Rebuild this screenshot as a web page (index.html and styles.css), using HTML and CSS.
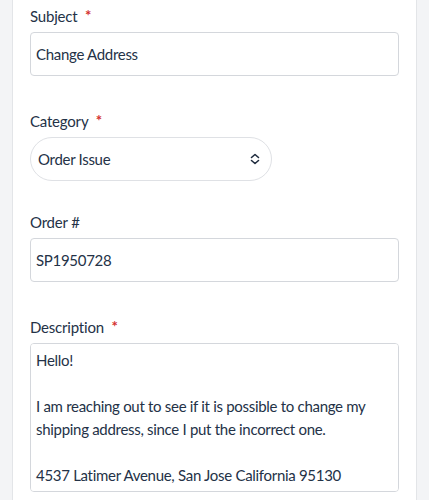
FILE: index.html
```html
<!DOCTYPE html>
<html>
<head>
    <title>Contact Support</title>
    <link rel="stylesheet" href="styles.css">
</head>
<body>
    <div class="page">
        <form class="card">
            <div class="field">
                <label class="label" for="subject">Subject <span class="req">*</span></label>
                <input class="input" id="subject" type="text" value="Change Address">
            </div>

            <div class="field field-select">
                <label class="label" for="category">Category <span class="req">*</span></label>
                <div class="select-wrap">
                    <select class="select" id="category">
                        <option>Order Issue</option>
                    </select>
                    <svg class="chevron" width="10" height="12" viewBox="0 0 10 12">
                        <path d="M1.5 4.5 L5 1.5 L8.5 4.5 M1.5 7.5 L5 10.5 L8.5 7.5" fill="none" stroke="#1f2b3e" stroke-width="1.6" stroke-linecap="round" stroke-linejoin="round"/>
                    </svg>
                </div>
            </div>

            <div class="field">
                <label class="label" for="order">Order #</label>
                <input class="input" id="order" type="text" value="SP1950728">
            </div>

            <div class="field field-last">
                <label class="label" for="description">Description <span class="req">*</span></label>
                <textarea class="textarea" id="description">Hello!

I am reaching out to see if it is possible to change my shipping address, since I put the incorrect one.

4537 Latimer Avenue, San Jose California 95130</textarea>
            </div>
        </form>
    </div>
</body>
</html>
```

FILE: styles.css
```css
body {
    margin: 0;
    background: #f3f4f6;
    font-family: Lato, "Liberation Sans", sans-serif;
    color: #243247;
}
.page {
    padding: 0 12px;
}
.card {
    background: white;
    border-left: 1px solid #e3e5e8;
    border-right: 1px solid #e3e5e8;
    padding: 6px 17px 8px;
    min-height: 500px;
    box-sizing: border-box;
}
.field {
    margin-bottom: 35px;
}
.field-select {
    margin-bottom: 31px;
}
.field-last {
    margin-bottom: 0;
}
.label {
    display: block;
    font-size: 15px;
    letter-spacing: -0.2px;
    line-height: 20px;
    margin-bottom: 6px;
}
.req {
    color: #d32f2f;
    font-size: 15px;
    font-weight: bold;
    line-height: 0;
    margin-left: 4px;
    position: relative;
    top: -1px;
}
.input,
.select,
.textarea {
    display: block;
    box-sizing: border-box;
    font-family: inherit;
    font-size: 15px;
    letter-spacing: -0.3px;
    color: #243247;
    background: white;
    margin: 0;
}
.input {
    width: 100%;
    height: 44px;
    padding: 0 5px;
    border: 1px solid #d4d7dc;
    border-radius: 4px;
}
.select-wrap {
    position: relative;
    width: 242px;
}
.select {
    width: 100%;
    height: 44px;
    padding: 0 7px;
    border: 1px solid #dfe1e5;
    border-radius: 22px;
    appearance: none;
    -webkit-appearance: none;
}
.chevron {
    position: absolute;
    right: 12px;
    top: 16px;
}
.textarea {
    width: 100%;
    height: 149px;
    padding: 5px 5px;
    line-height: 23px;
    border: 1px solid #d4d7dc;
    border-radius: 4px;
    resize: none;
}
```
